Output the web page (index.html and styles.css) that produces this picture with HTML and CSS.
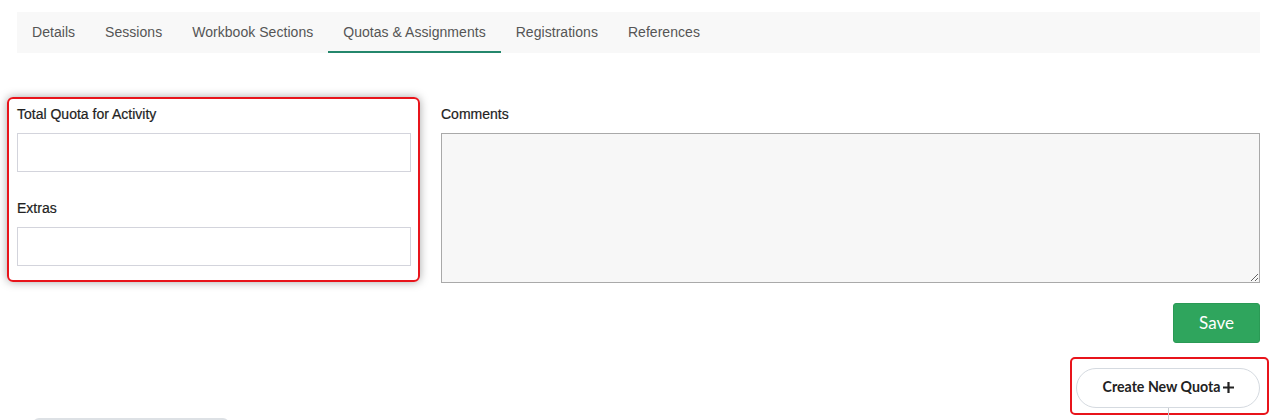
FILE: index.html
```html
<!DOCTYPE html>
<html>
<head>
<meta charset="utf-8">
<link rel="stylesheet" href="styles.css">
</head>
<body>
<div class="page">
  <nav class="tabs">
    <a class="tab">Details</a>
    <a class="tab">Sessions</a>
    <a class="tab">Workbook Sections</a>
    <a class="tab active">Quotas &amp; Assignments</a>
    <a class="tab">Registrations</a>
    <a class="tab">References</a>
  </nav>

  <div class="form-row">
    <div class="quota-col highlight">
      <label class="label">Total Quota for Activity</label>
      <input class="input" type="text">
      <label class="label label-gap">Extras</label>
      <input class="input" type="text">
    </div>
    <div class="comments-col">
      <label class="label">Comments</label>
      <textarea class="textarea"></textarea>
      <div class="actions">
        <button class="btn-save">Save</button>
      </div>
    </div>
  </div>

  <div class="create-row">
    <div class="create-wrap highlight-sm">
      <button class="btn-create">Create New Quota
        <svg class="plus" width="13" height="13" viewBox="0 0 13 13"><path d="M6.5 1v11M1 6.5h11" stroke="#222" stroke-width="2.2" fill="none"/></svg>
      </button>
      <span class="stem"></span>
    </div>
  </div>

  <div class="bottom-pill"></div>
</div>
</body>
</html>
```

FILE: styles.css
```css
* { box-sizing: border-box; }
html, body { margin: 0; padding: 0; background: #fff; }
body { font-family: "Liberation Sans", Arial, sans-serif; color: #222; overflow: hidden; height: 420px; }
.page { padding: 12px 24px 0 17px; }

.tabs {
  display: flex;
  height: 41px;
  background: #f8f8f8;
}
.tab {
  padding: 0 15px;
  font-size: 14px;
  letter-spacing: 0.04px;
  line-height: 41px;
  height: 41px;
  color: #555;
  border-bottom: 2px solid transparent;
  white-space: nowrap;
}
.tab.active { border-bottom-color: #24876c; }

.form-row {
  display: flex;
  align-items: flex-start;
  margin-top: 51px;
}
.quota-col {
  width: 413px;
  margin: -7px 0 0 -10px;
  padding: 5px 8px 14px 8px;
  display: flex;
  flex-direction: column;
}
.highlight {
  border: 2px solid #e8141b;
  border-radius: 6px;
  box-shadow: 0 0 10px rgba(0,0,0,0.35);
}
.label {
  display: block;
  font-size: 14px;
  line-height: 20px;
  color: #222;
  margin-bottom: 9px;
  -webkit-text-stroke: 0.2px #222;
}
.label-gap { margin-top: 26px; }
.input {
  width: 394px;
  height: 39px;
  border: 1px solid #d3d4dc;
  background: #fff;
  padding: 0 8px;
  font: inherit;
}
.comments-col {
  flex: 1;
  margin-left: 21px;
}
.textarea {
  display: block;
  width: 100%;
  height: 150px;
  border: 1px solid #a9a9a9;
  background: #f7f7f7;
  font: inherit;
  resize: both;
}
.actions {
  display: flex;
  justify-content: flex-end;
  margin-top: 20px;
}
.btn-save {
  width: 87px;
  height: 40px;
  padding: 0 0 2px;
  background: #2fa55d;
  border: 1px solid #2a9a55;
  border-radius: 3px;
  color: #fff;
  font-family: Lato, "Liberation Sans", sans-serif;
  font-size: 17px;
}

.create-row {
  display: flex;
  justify-content: flex-end;
  margin-top: 14px;
  margin-right: -9px;
}
.create-wrap {
  position: relative;
  padding: 9px 7px 5px 4px;
}
.highlight-sm {
  border: 2px solid #e8141b;
  border-radius: 5px;
}
.btn-create {
  display: flex;
  align-items: center;
  gap: 2px;
  width: 184px;
  height: 40px;
  justify-content: center;
  padding: 0 0 3px 2px;
  background: #fff;
  border: 1px solid #d5dae0;
  border-radius: 20px;
  font-family: Lato, "Liberation Sans", sans-serif;
  font-weight: 700;
  font-size: 14.2px;
  color: #222;
}
.plus { display: block; margin-top: 1px; }
.stem {
  position: absolute;
  left: 96px;
  top: 49px;
  width: 1px;
  height: 14px;
  background: #c8ccd0;
}
.bottom-pill {
  width: 196px;
  height: 6px;
  margin-left: 16px;
  margin-top: 3px;
  background: #dde1e5;
  border-radius: 6px 6px 0 0;
}
```
